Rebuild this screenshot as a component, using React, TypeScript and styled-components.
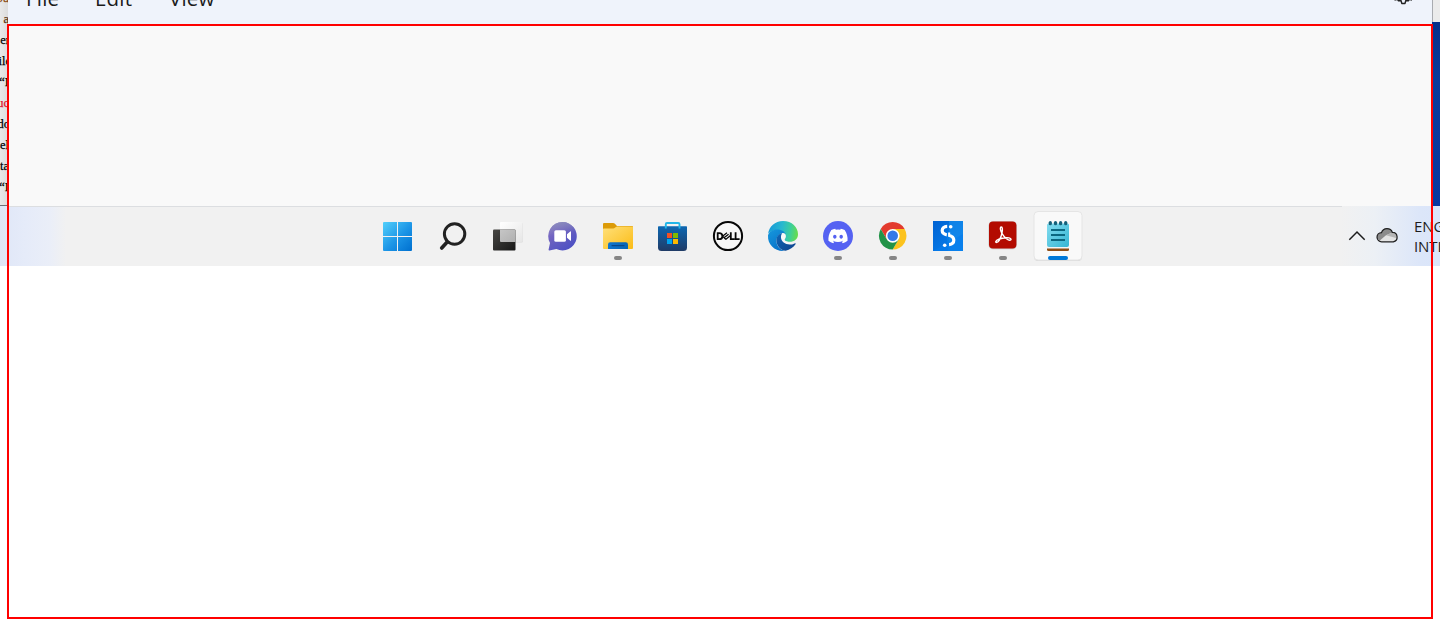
import React from "react";
import styled, { createGlobalStyle } from "styled-components";

const GlobalStyle = createGlobalStyle`
  * { box-sizing: border-box; }
  body { margin: 0; background: #fff; overflow: hidden; }
`;

const Screen = styled.div`
  position: relative;
  width: 1440px;
  height: 643px;
  overflow: hidden;
  background: #fff;
  font-family: "Open Sans", "Noto Sans", sans-serif;
`;

const Desktop = styled.div`
  display: flex;
  height: 206px;
`;

const DocumentEdge = styled.div`
  width: 8px;
  height: 206px;
  overflow: hidden;
  display: flex;
  flex-direction: column;
  align-items: flex-end;
  background: linear-gradient(90deg, #e9e9e9, #dcdcdc);
  border-bottom: 1px solid #6c7076;
`;

const DocumentLine = styled.span<{ $color?: string; $shift?: number; $out?: number }>`
  flex: none;
  height: 21px;
  line-height: 21px;
  margin-top: ${(p) => p.$shift ?? 0}px;
  margin-right: ${(p) => p.$out ?? -1}px;
  white-space: nowrap;
  font-family: "Liberation Serif", serif;
  font-size: 12.5px;
  color: ${(p) => p.$color ?? "#000"};
  -webkit-text-stroke: 0.25px currentColor;
`;

const Editor = styled.div`
  width: 1424px;
  display: flex;
  flex-direction: column;
  background: #f9f9f9;
`;

const MenuBar = styled.div`
  height: 25px;
  display: flex;
  justify-content: space-between;
  padding: 0 19px 0 18px;
  background: #eff3fb;
  overflow: hidden;
`;

const Menus = styled.div`
  display: flex;
  height: 24px;
  margin-top: -14px;
`;

const MenuItem = styled.span<{ $width: number }>`
  width: ${(p) => p.$width}px;
  font-size: 20.5px;
  letter-spacing: 0.2px;
  line-height: 24px;
  color: #1b1b1b;
`;

const RightEdge = styled.div`
  width: 8px;
  display: flex;
  flex-direction: column;
`;

const PaleStrip = styled.div`
  height: 22px;
  background: #ebebeb;
  border-left: 1px solid #a9abb0;
`;

const BlueStrip = styled.div`
  flex: 1;
  background: linear-gradient(#06308a, #0b3b9c 30%, #0838a0);
`;

const Taskbar = styled.div`
  position: relative;
  height: 60px;
  display: flex;
  justify-content: space-between;
  padding-left: 370px;
  background: linear-gradient(90deg, #dfe6f7 0, #e5ebf9 25px, #eaeef8 50px, #f1f1f1 66px, #f1f1f1 1340px, #ecf0f5 1375px, #dce6f9 1420px, #dae5fa 1440px);
`;

const TaskbarRule = styled.div`
  position: absolute;
  top: 0;
  left: 8px;
  width: 1334px;
  height: 1px;
  background: #dcdee1;
`;

const Apps = styled.div`
  display: flex;
`;

const AppCell = styled.div`
  width: 55px;
  height: 60px;
  svg { display: block; }
`;

const Tray = styled.div`
  display: flex;
  width: 94px;
  overflow: hidden;
`;

const TrayIcons = styled.svg`
  flex: none;
`;

const Language = styled.div`
  flex: none;
  margin-left: -1px;
  padding-top: 10px;
  font-size: 15px;
  line-height: 20px;
  letter-spacing: -0.1px;
  color: #1c1c1c;
`;

const Frame = styled.div`
  position: absolute;
  left: 7px;
  top: 24px;
  width: 1426px;
  height: 595px;
  border: 2px solid #f00;
`;

const Running = () => <rect x="24" y="50" width="8" height="4" rx="2" fill="#868686" />;

const StartIcon = () => (
  <>
    <defs>
      <linearGradient id="start" gradientUnits="userSpaceOnUse" x1="13" y1="16" x2="42" y2="45">
        <stop stopColor="#52d0fb" />
        <stop offset=".55" stopColor="#1b94e6" />
        <stop offset="1" stopColor="#0070cf" />
      </linearGradient>
    </defs>
    <path fill="url(#start)" d="M14 16h13v14H13V17q0-1 1-1zM28 16h13q1 0 1 1v13H28zM13 31h14v14H14q-1 0-1-1zM28 31h14v13q0 1-1 1H28z" />
  </>
);

const SearchIcon = () => (
  <g fill="none" stroke="#222" strokeWidth="3" strokeLinecap="round">
    <circle cx="29.600" cy="28" r="10.200" />
    <path strokeWidth="3.600" d="M22.200 36 16.700 42" />
  </g>
);

const TaskViewIcon = () => (
  <>
    <defs>
      <linearGradient id="tvd" x1="0" y1="0" x2="1" y2="1">
        <stop stopColor="#484744" /><stop offset="1" stopColor="#171717" />
      </linearGradient>
      <linearGradient id="tvl" x1="0" y1="0" x2="1" y2="1">
        <stop stopColor="#fff" /><stop offset="1" stopColor="#e6e6e6" />
      </linearGradient>
      <linearGradient id="tvm" x1="0" y1="0" x2="1" y2="1">
        <stop stopColor="#c6c6c6" /><stop offset="1" stopColor="#b0b0b0" />
      </linearGradient>
    </defs>
    <rect x="20.500" y="17" width="22.300" height="19.500" rx="1" fill="#cdcdcd" opacity=".6" />
    <rect x="20" y="16" width="22.500" height="20" rx="1" fill="url(#tvl)" />
    <rect x="13" y="23.500" width="22.500" height="21" rx="1" fill="url(#tvd)" />
    <path d="M20 23.500h14.500q1 0 1 1V36H21q-1 0-1-1z" fill="url(#tvm)" />
  </>
);

const ChatIcon = () => (
  <>
    <defs>
      <linearGradient id="chat" x1="0" y1="0" x2=".7" y2="1">
        <stop stopColor="#8d70c9" /><stop offset=".5" stopColor="#6a60c0" /><stop offset="1" stopColor="#4c50c4" />
      </linearGradient>
      <linearGradient id="chatTop" x1="0" y1="0" x2=".2" y2="1">
        <stop stopColor="#8b91ba" /><stop offset=".5" stopColor="#8b91ba" stopOpacity="0" />
      </linearGradient>
    </defs>
    <path d="M27.600 16a14.200 14.200 0 1 1-6.200 27l-7 1.500q-1 .1-.8-1l1.400-6.400A14.200 14.200 0 0 1 27.600 16z" fill="url(#chat)" />
    <path d="M27.600 16a14.200 14.200 0 1 1-6.200 27l-7 1.500q-1 .1-.8-1l1.400-6.400A14.200 14.200 0 0 1 27.600 16z" fill="url(#chatTop)" />
    <rect x="19.300" y="24.200" width="11.600" height="11.600" rx="1.600" fill="#fff" />
    <path d="M32 28.200 35.200 25.400q.8-.5.8.4v8.400q0 .9-.8.4L32 31.800z" fill="#fff" />
  </>
);

const FolderIcon = () => (
  <>
    <defs>
      <linearGradient id="folder" x1="0" y1="0" x2="1" y2="1">
        <stop stopColor="#ffe07a" /><stop offset="1" stopColor="#fbbc16" />
      </linearGradient>
      <linearGradient id="folderBlue" x1="0" y1="0" x2="1" y2="0">
        <stop stopColor="#0f75cf" /><stop offset="1" stopColor="#0865b2" />
      </linearGradient>
    </defs>
    <path d="M13 18q0-1 1-1h9.200q.8 0 1.400.6L27 20h15q1 0 1 1v6H13z" fill="#dc9b08" />
    <path d="M13 23q0-.6.8-.6h9.400q1 0 1.700-.7l1-.8q.6-.5 1.400-.5H42q1 0 1 1V42q0 1-1 1H14q-1 0-1-1z" fill="url(#folder)" />
    <path d="M18 43v-4.500q0-2.200 2.200-2.200h15.600q2.200 0 2.200 2.200V43z" fill="url(#folderBlue)" />
    <path d="M22 39.600h12" stroke="#08478a" strokeWidth="1.100" strokeLinecap="round" />
    <Running />
  </>
);

const StoreIcon = () => (
  <>
    <defs>
      <linearGradient id="store" x1="0" y1="0" x2="0" y2="1">
        <stop stopColor="#0c67b2" /><stop offset="1" stopColor="#203b66" />
      </linearGradient>
    </defs>
    <path d="M13 21q0-.7.7-.7h27.600q.7 0 .7.7v20.500q0 3.500-3.500 3.500h-22q-3.500 0-3.500-3.500z" fill="url(#store)" />
    <path d="M20.800 22.500v-4.300q0-1.200 1.200-1.200h11.300q1.200 0 1.200 1.200v4.300" fill="none" stroke="#20b5e8" strokeWidth="1.900" />
    <path d="M22 27h5v5h-5z" fill="#f25022" />
    <path d="M28 27h5v5h-5z" fill="#7fba00" />
    <path d="M22 33h5v5h-5z" fill="#00a4ef" />
    <path d="M28 33h5v5h-5z" fill="#ffb900" />
  </>
);

const DellIcon = () => (
  <>
    <circle cx="28" cy="30" r="14.100" fill="#f8f8f8" stroke="#080808" strokeWidth="2" />
    <g fill="none" stroke="#080808" strokeWidth="1.800">
      <path d="M17.700 27.200v6h1.500q3.200 0 3.200-3t-3.200-3z" />
      <path d="M22.500 30.200 27 26.700M24 31.700 28.600 28.200M25.600 33.400 30.200 29.800M22.400 30.100l3.300 3.200" strokeWidth="1.300" />
      <path d="M30.800 26.300v6.900h3.800M35.600 26.300v6.900h4" />
    </g>
  </>
);

const EdgeIcon = () => (
  <>
    <defs>
      <linearGradient id="edgeTop" x1="0" y1=".4" x2="1" y2=".5">
        <stop stopColor="#1699d8" /><stop offset=".45" stopColor="#28b8cf" /><stop offset=".75" stopColor="#3dcf9a" /><stop offset="1" stopColor="#68dc4b" />
      </linearGradient>
      <linearGradient id="edgeLeft" x1="0" y1="0" x2=".6" y2="1">
        <stop stopColor="#1698dd" /><stop offset="1" stopColor="#0872c9" />
      </linearGradient>
      <linearGradient id="edgeLow" x1="0" y1="0" x2="1" y2="1">
        <stop stopColor="#0f66b5" /><stop offset="1" stopColor="#10438c" />
      </linearGradient>
    </defs>
    <path d="M25 28h8v8.500l6 2.500-6 1-8-4z" fill="#f8f8f8" />
    <path d="M13.100 28C14 20.500 20 15 28 15c9 0 15 6.200 15 13.200 0 4.700-3.700 7.600-8.200 7.600-3.200 0-5.400-1.200-5.100-2.300.3-.8 1.200-1.400 1.200-3.400 0-3-3.900-5.900-9-5.900-4.300 0-7.600 2-8.800 3.800z" fill="url(#edgeTop)" />
    <path d="M13 29.500c.7-3.600 4.600-6.100 9-6.100 4.100 0 7.500 1.700 8.700 4.600-1-.9-2.200-1.300-3.400-1-3.900 1-6.300 4.500-5.700 9.200.5 4 3.100 7.200 7.800 8.700C20.500 45.800 12.400 38.900 13 29.500z" fill="url(#edgeLeft)" />
    <path d="M26.500 27.300c-4 1.200-5.600 4.600-4.900 8.900.8 4.700 4.800 8.300 9 8.500 4.300-.9 7.800-3.300 9.900-6.500.5-.8-.2-1.200-.9-.8-6.600 3.200-13.300-.7-13.600-5.800-.1-1.700.2-3.100 1.200-4.100z" fill="url(#edgeLow)" />
  </>
);

const DiscordIcon = () => (
  <>
    <circle cx="28" cy="30" r="15" fill="#5562f2" />
    <path transform="translate(18.400 20.400) scale(.8)" fill="#fff" d="M20.317 4.370a19.800 19.800 0 0 0-4.885-1.515c-.25.45-.45.85-.61 1.250a18.300 18.300 0 0 0-5.644 0c-.16-.4-.4-.84-.62-1.250A19.700 19.700 0 0 0 3.677 4.370C.533 9.046-.32 13.580.1 18.058a19.900 19.900 0 0 0 5.993 3.030l1.226-1.994a13 13 0 0 1-1.872-.892l.37-.29a14.200 14.200 0 0 0 12.370 0l.37.290a12.300 12.300 0 0 1-1.873.892l1.230 1.990a19.800 19.800 0 0 0 6-3.030c.5-5.170-.84-9.670-3.600-13.684zM8.020 15.330c-1.180 0-2.157-1.085-2.157-2.419S6.820 10.490 8.020 10.490s2.175 1.090 2.157 2.420-.956 2.420-2.157 2.420zm7.975 0c-1.183 0-2.157-1.085-2.157-2.419s.955-2.420 2.157-2.420 2.175 1.090 2.157 2.420-.946 2.420-2.157 2.420z" />
    <Running />
  </>
);

const ChromeIcon = () => (
  <>
    <g transform="translate(27.700 29.800)">
      <path d="M-11.950-6.900A13.800 13.800 0 0 1 11.950-6.900H0L-6 3.450z" fill="#e33b2e" />
      <path d="M11.950-6.900A13.800 13.800 0 0 1 0 13.800L6 3.450 0-6.900z" fill="#fcc31e" />
      <path d="M0 13.800A13.800 13.800 0 0 1-11.950-6.900L-6 3.450H6z" fill="#229348" />
      <circle r="6.900" fill="#fff" />
      <circle r="5.300" fill="#3478e8" />
    </g>
    <Running />
  </>
);

const SIcon = () => (
  <>
    <defs>
      <linearGradient id="sBlue" x1="0" y1="0" x2="1" y2="1">
        <stop stopColor="#0063d3" /><stop offset="1" stopColor="#0a82ee" />
      </linearGradient>
    </defs>
    <path d="M13 15h30v30H13z" fill="url(#sBlue)" />
    <path d="M29 15h14v30H28z" fill="#168eed" opacity=".65" />
    <path d="M13 45 43 28v17z" fill="#057cec" opacity=".6" />
    <path d="M27.200 20.300c-3.300.1-5 2.100-5 4.300 0 2.400 1.900 3.700 4.700 4.300M28.600 26.600v2.600c3 .7 5.200 2.200 5.200 4.900 0 2.400-1.700 4.300-4.700 4.500" fill="none" stroke="#fff" strokeWidth="3.200" />
    <circle cx="30.700" cy="20.700" r="1.800" fill="#fff" />
    <circle cx="24.700" cy="39.200" r="1.800" fill="#fff" />
    <path d="M27.500 26v11" stroke="#087ce5" strokeWidth="1.200" />
    <Running />
  </>
);

const AcrobatIcon = () => (
  <>
    <rect x="13.500" y="15.300" width="28.400" height="28" rx="4.500" fill="#aaa" opacity=".55" />
    <rect x="14" y="15.500" width="27.400" height="27" rx="4" fill="#b30b00" />
    <path d="M26.300 21c-1.700 0-.9 4 1.100 7.200 2.300 3.700 6 6.600 7.900 6 1.900-.8.100-2.900-4.600-2.500-4.300.3-9.400 1.900-9.900 3.800-.4 1.600 1.800 1.400 3.600-1.400 2.300-3.600 4.300-13.100 1.900-13.100z" fill="none" stroke="#fff" strokeWidth="1.400" />
    <Running />
  </>
);

const NotepadIcon = () => (
  <>
    <defs>
      <linearGradient id="pad" x1="0" y1="0" x2="1" y2="1">
        <stop stopColor="#83dcef" /><stop offset="1" stopColor="#35b5d3" />
      </linearGradient>
    </defs>
    <rect x="4" y="6" width="48" height="49" rx="4" fill="#dadada" />
    <rect x="4" y="5.500" width="48" height="48.500" rx="4" fill="#f9f9f9" stroke="#e5e5e5" />
    <path d="M17 40h22v3.500q0 1.500-1.500 1.500h-19q-1.500 0-1.500-1.500z" fill="#904d13" />
    <path d="M17 40h22v2.500H17z" fill="#f5f5f5" />
    <path d="M17 19q0-1.500 1.500-1.500h19q1.500 0 1.500 1.500v20q0 2-2 2H19q-2 0-2-2z" fill="url(#pad)" />
    {[20.300, 25.500, 30.600, 35.700].map((x) => (
      <rect key={x} x={x - 1.600} y="15" width="3.200" height="4.300" rx="1.600" fill="#146079" />
    ))}
    <path d="M21 24h14M21 29h14M21 34h14" stroke="#0b6780" strokeWidth="1.900" />
    <rect x="18" y="50" width="20" height="4" rx="2" fill="#0078d8" />
  </>
);

const icons = [
  StartIcon, SearchIcon, TaskViewIcon, ChatIcon, FolderIcon, StoreIcon, DellIcon,
  EdgeIcon, DiscordIcon, ChromeIcon, SIcon, AcrobatIcon, NotepadIcon,
];

const lines: { text: string; color?: string; out?: number }[] = [
  { text: "ou", color: "#8a4a12" },
  { text: "a", color: "#5a3410" },
  { text: "er", out: -2 },
  { text: "ile", out: -3 },
  { text: "“I", out: -1 },
  { text: "uc", color: "#e0122a" },
  { text: "do", out: -2 },
  { text: "el" },
  { text: "ta" },
  { text: "“I", out: -1 },
];

export default function App() {
  return (
    <Screen>
      <GlobalStyle />
      <Desktop>
        <DocumentEdge>
          {lines.map((l, i) => (
            <DocumentLine key={i} $color={l.color} $out={l.out} $shift={i === 0 ? -12 : 0}>{l.text}</DocumentLine>
          ))}
        </DocumentEdge>
        <Editor>
          <MenuBar>
            <Menus>
              <MenuItem $width={69}>File</MenuItem>
              <MenuItem $width={74}>Edit</MenuItem>
              <MenuItem $width={60}>View</MenuItem>
            </Menus>
            <svg width="20" height="6" viewBox="0 0 20 6">
              <path d="M1.500 0 4.500-.7 5.500.8 8 .6 8.800 3.400H12L12.800.6 15.300.8 16.300-.7 19 0" fill="none" stroke="#222" strokeWidth="1.500" strokeLinejoin="round" />
            </svg>
          </MenuBar>
        </Editor>
        <RightEdge>
          <PaleStrip />
          <BlueStrip />
        </RightEdge>
      </Desktop>
      <Taskbar>
        <TaskbarRule />
        <Apps>
          {icons.map((Icon, i) => (
            <AppCell key={i}>
              <svg width="55" height="60" viewBox="0 0 55 60"><Icon /></svg>
            </AppCell>
          ))}
        </Apps>
        <Tray>
          <TrayIcons width="69" height="60" viewBox="0 0 69 60">
            <path d="m3.300 33.800 7.700-7.800 7.700 7.800" fill="none" stroke="#1c1c1c" strokeWidth="1.500" />
            <g transform="translate(0 .6)">
              <path d="M35.800 35.200a4.600 4.600 0 0 1-.3-9.200 5.800 5.800 0 0 1 10.900-.2 4.750 4.750 0 0 1 .9 9.400z" fill="#e3e3e3" />
              <path d="M31.500 31.600a4.300 4.300 0 0 1 4-5.600 5.800 5.800 0 0 1 10.900-.2l-6.400 2.900-6.500 5.500z" fill="#8b8b8b" />
              <path d="m40 28.700 6.400-2.900 4 2.600-.3 3.100z" fill="#b5b5b5" />
              <path d="M35.800 35.200a4.600 4.600 0 0 1-.3-9.200 5.800 5.800 0 0 1 10.900-.2 4.750 4.750 0 0 1 .9 9.400z" fill="none" stroke="#202020" strokeWidth="1.300" />
            </g>
          </TrayIcons>
          <Language>ENG<br />INTL</Language>
        </Tray>
      </Taskbar>
      <Frame />
    </Screen>
  );
}
